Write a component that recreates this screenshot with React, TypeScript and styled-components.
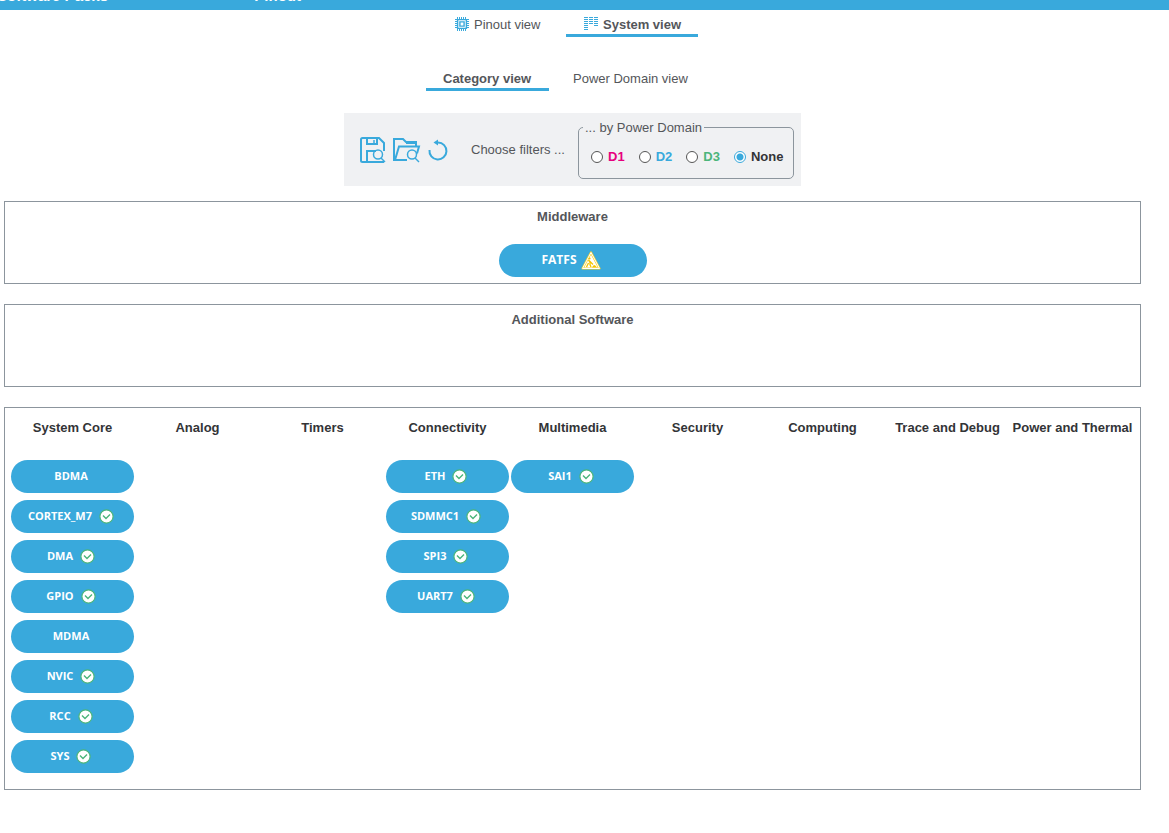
import React from "react";
import styled, { createGlobalStyle } from "styled-components";

const blue = "#39a9dc";
const line = "#8c959d";
const grey = "#54565a";
const ink = "#333437";

const Global = createGlobalStyle`
  * { box-sizing: border-box; }
  body {
    margin: 0;
    background: #fff;
    color: ${grey};
    font: 13px/16px "Liberation Sans", Arial, sans-serif;
  }
  button { font: inherit; color: inherit; border: 0; background: none; padding: 0; margin: 0; cursor: pointer; }
`;

const TopBar = styled.header`
  display: flex;
  align-items: flex-end;
  height: 10px;
  background: ${blue};
  overflow: hidden;
`;
const TopLink = styled.a<{ $width: number }>`
  flex: none;
  display: flex;
  justify-content: flex-end;
  width: ${(p) => p.$width}px;
  padding-bottom: 5px;
  color: #fff;
  font-size: 15px;
  line-height: 18px;
  font-weight: bold;
  text-decoration: none;
  white-space: nowrap;
`;
const Page = styled.main`
  padding: 0 28px 40px 4px;
`;
const Tabs = styled.nav<{ $gap: number }>`
  display: flex;
  justify-content: center;
  height: 27px;
  margin-bottom: ${(p) => p.$gap}px;
`;
const Tab = styled.button<{ $active?: boolean; $width: number; $inset: number }>`
  display: flex;
  align-items: center;
  gap: 5px;
  width: ${(p) => p.$width}px;
  height: 27px;
  border-bottom: 3px solid ${(p) => (p.$active ? blue : "transparent")};
  font-weight: ${(p) => (p.$active ? "bold" : "normal")};
  padding: 6px 0 0 ${(p) => p.$inset}px;
  white-space: nowrap;
  svg { margin-bottom: 2px; }
`;
const FilterBar = styled.form`
  display: flex;
  width: fit-content;
  height: 73px;
  margin: 0 auto 15px;
  padding: 6px 7px 6px 16px;
  background: #f0f1f3;
`;
const Tools = styled.div`
  display: flex;
  align-items: center;
  gap: 7px;
  margin-right: 23px;
`;
const Tool = styled.button`
  display: flex;
`;
const Hint = styled.span`
  align-self: center;
  width: 107px;
`;
const Domains = styled.fieldset`
  display: flex;
  width: 216px;
  height: 60px;
  margin: 0;
  padding: 13px 0 0 12px;
  border: 1px solid ${line};
  border-radius: 5px;
  gap: 14px;
  legend {
    padding: 1px 2px 0;
    margin-left: -8px;
  }
`;
const Choice = styled.label<{ $color: string }>`
  display: flex;
  align-items: center;
  gap: 5px;
  height: 16px;
  color: ${(p) => p.$color};
  font-weight: bold;
`;
const Radio = styled.input`
  appearance: none;
  width: 12px;
  height: 12px;
  margin: 0;
  border: 1px solid #555;
  border-radius: 50%;
  background: #fff;
  &:checked {
    border-color: ${blue};
    background: radial-gradient(circle, ${blue} 3px, #fff 4px);
  }
`;
const Panel = styled.section`
  height: 83px;
  margin-bottom: 20px;
  padding-top: 7px;
  border: 1px solid ${line};
  display: flex;
  flex-direction: column;
  align-items: center;
`;
const PanelTitle = styled.h2`
  margin: 0 0 19px;
  font-size: 13px;
  line-height: 16px;
`;
const Pill = styled.button<{ $wide?: boolean }>`
  display: flex;
  align-items: center;
  justify-content: center;
  gap: ${(p) => (p.$wide ? 4 : 7)}px;
  width: ${(p) => (p.$wide ? "148px" : "100%")};
  height: 33px;
  padding: 0 3px 1px 0;
  border-radius: 17px;
  background: ${blue};
  color: #fff;
  font: bold ${(p) => (p.$wide ? 12 : 11)}px/16px "Open Sans", sans-serif;
`;
const Categories = styled.section`
  display: grid;
  grid-template-columns: repeat(9, minmax(0, 1fr));
  padding: 12px 5px 16px;
  border: 1px solid ${line};
`;
const Column = styled.div`
  display: flex;
  flex-direction: column;
  align-items: center;
  gap: 7px;
  padding: 0 1px;
`;
const ColumnTitle = styled.h3`
  margin: 0 0 17px;
  color: ${ink};
  font-size: 13px;
  line-height: 16px;
  white-space: nowrap;
`;

const Chip = () => (
  <svg width="14" height="14" viewBox="0 0 14 14" fill="none" stroke={blue}>
    <path d="M2.500 0v2M4.500 0v2M6.500 0v2M8.500 0v2M10.500 0v2M2.500 12v2M4.500 12v2M6.500 12v2M8.500 12v2M10.500 12v2M0 2.500h2M0 4.500h2M0 6.500h2M0 8.500h2M0 10.500h2M12 2.500h2M12 4.500h2M12 6.500h2M12 8.500h2M12 10.500h2" />
    <path strokeWidth="1.400" d="M2.600 2.600h8.800v8.800H2.600zM4.900 4.900h4.200v4.200H4.900z" />
  </svg>
);
const Lists = () => (
  <svg width="14" height="14" viewBox="0 0 14 14" fill="none" stroke={blue} strokeDasharray="1 1">
    <path strokeWidth="4" d="M2 0v13M7 0v7M12 0v9" />
  </svg>
);
const SaveIcon = () => (
  <svg width="26" height="26" viewBox="0 0 26 26" fill="none" stroke={blue} strokeWidth="2">
    <path d="M24 14V6l-5-5H2.500Q1 1 1 2.500v21Q1 25 2.500 25H24M7 1v6h10V1M7 25V14h9" />
    <path strokeWidth="1.500" d="M14 3v3" />
    <circle cx="18" cy="17.500" r="4.500" strokeWidth="1.500" />
    <path strokeWidth="1.500" d="M21 21l4 4" />
  </svg>
);
const OpenIcon = () => (
  <svg width="28" height="26" viewBox="0 0 28 26" fill="none" stroke={blue} strokeWidth="2">
    <path d="M14 23H1V2h9l3 3h10v4M2 23L6 9.500h20l-2 7M13 6h9" />
    <circle cx="19" cy="17.500" r="4.500" strokeWidth="1.500" />
    <path strokeWidth="1.500" d="M22 21l4 4" />
  </svg>
);
const ResetIcon = () => (
  <svg width="20" height="22" viewBox="0 0 20 22" fill="none" stroke={blue} strokeWidth="2">
    <path d="M1.500 11A8.500 8.500 0 1 0 10 3.500H8" />
    <path fill={blue} stroke="none" d="M5.500 3.500L10 0.500v6z" />
  </svg>
);
const Check = () => (
  <svg width="15" height="15" viewBox="0 0 15 15">
    <circle cx="7.500" cy="7.500" r="6.600" fill="#fff" stroke="#4bb57a" strokeWidth="1.200" />
    <path d="M4 6.500l3 3 4-4" fill="none" stroke="#4bb57a" strokeWidth="1.400" />
  </svg>
);
const Warning = () => (
  <svg width="20" height="19" viewBox="0 0 20 19">
    <path d="M10 1.500L18.500 17.500h-17z" fill="#fff" stroke="#fbd12b" strokeWidth="2.200" strokeLinejoin="round" />
    <path d="M10 1.500L18.500 17.500h-17z" fill="none" stroke="#fff" strokeWidth="1" strokeLinejoin="round" />
    <circle cx="8.500" cy="7.500" r="1.100" fill="#f5c400" />
    <path d="M7.500 9l1.500 2.500v2l1 2.500M7.500 12l-2 4M8 9.500l4 4" fill="none" stroke="#f5c400" strokeWidth="1.300" />
    <path d="M11 16.500q2-5 5 0z" fill="#f5c400" />
  </svg>
);

const domains = [
  { name: "D1", color: "#e6007e" },
  { name: "D2", color: "#39a9dc" },
  { name: "D3", color: "#4bb57a" },
  { name: "None", color: ink },
];

const categories: { title: string; items: [string, boolean][] }[] = [
  {
    title: "System Core",
    items: [
      ["BDMA", false],
      ["CORTEX_M7", true],
      ["DMA", true],
      ["GPIO", true],
      ["MDMA", false],
      ["NVIC", true],
      ["RCC", true],
      ["SYS", true],
    ],
  },
  { title: "Analog", items: [] },
  { title: "Timers", items: [] },
  { title: "Connectivity", items: [["ETH", true], ["SDMMC1", true], ["SPI3", true], ["UART7", true]] },
  { title: "Multimedia", items: [["SAI1", true]] },
  { title: "Security", items: [] },
  { title: "Computing", items: [] },
  { title: "Trace and Debug", items: [] },
  { title: "Power and Thermal", items: [] },
];

export default function App() {
  return (
    <>
      <Global />
      <TopBar>
        <TopLink href="#packs" $width={108}>Software Packs</TopLink>
        <TopLink href="#pinout" $width={193}>Pinout</TopLink>
      </TopBar>
      <Page>
        <Tabs $gap={27}>
          <Tab $width={119} $inset={8}><Chip />Pinout view</Tab>
          <Tab $width={132} $inset={18} $active><Lists />System view</Tab>
        </Tabs>
        <Tabs $gap={22}>
          <Tab $width={123} $inset={17} $active>Category view</Tab>
          <Tab $width={170} $inset={24}>Power Domain view</Tab>
        </Tabs>
        <FilterBar>
          <Tools>
            <Tool type="button" aria-label="Save filter"><SaveIcon /></Tool>
            <Tool type="button" aria-label="Open filter"><OpenIcon /></Tool>
            <Tool type="button" aria-label="Reset filters"><ResetIcon /></Tool>
          </Tools>
          <Hint>Choose filters ...</Hint>
          <Domains>
            <legend>... by Power Domain</legend>
            {domains.map((d) => (
              <Choice key={d.name} $color={d.color}>
                <Radio type="radio" name="domain" defaultChecked={d.name === "None"} />
                {d.name}
              </Choice>
            ))}
          </Domains>
        </FilterBar>
        <Panel>
          <PanelTitle>Middleware</PanelTitle>
          <Pill $wide>FATFS<Warning /></Pill>
        </Panel>
        <Panel>
          <PanelTitle>Additional Software</PanelTitle>
        </Panel>
        <Categories>
          {categories.map((c) => (
            <Column key={c.title}>
              <ColumnTitle>{c.title}</ColumnTitle>
              {c.items.map(([name, ok]) => (
                <Pill key={name}>{name}{ok && <Check />}</Pill>
              ))}
            </Column>
          ))}
        </Categories>
      </Page>
    </>
  );
}
